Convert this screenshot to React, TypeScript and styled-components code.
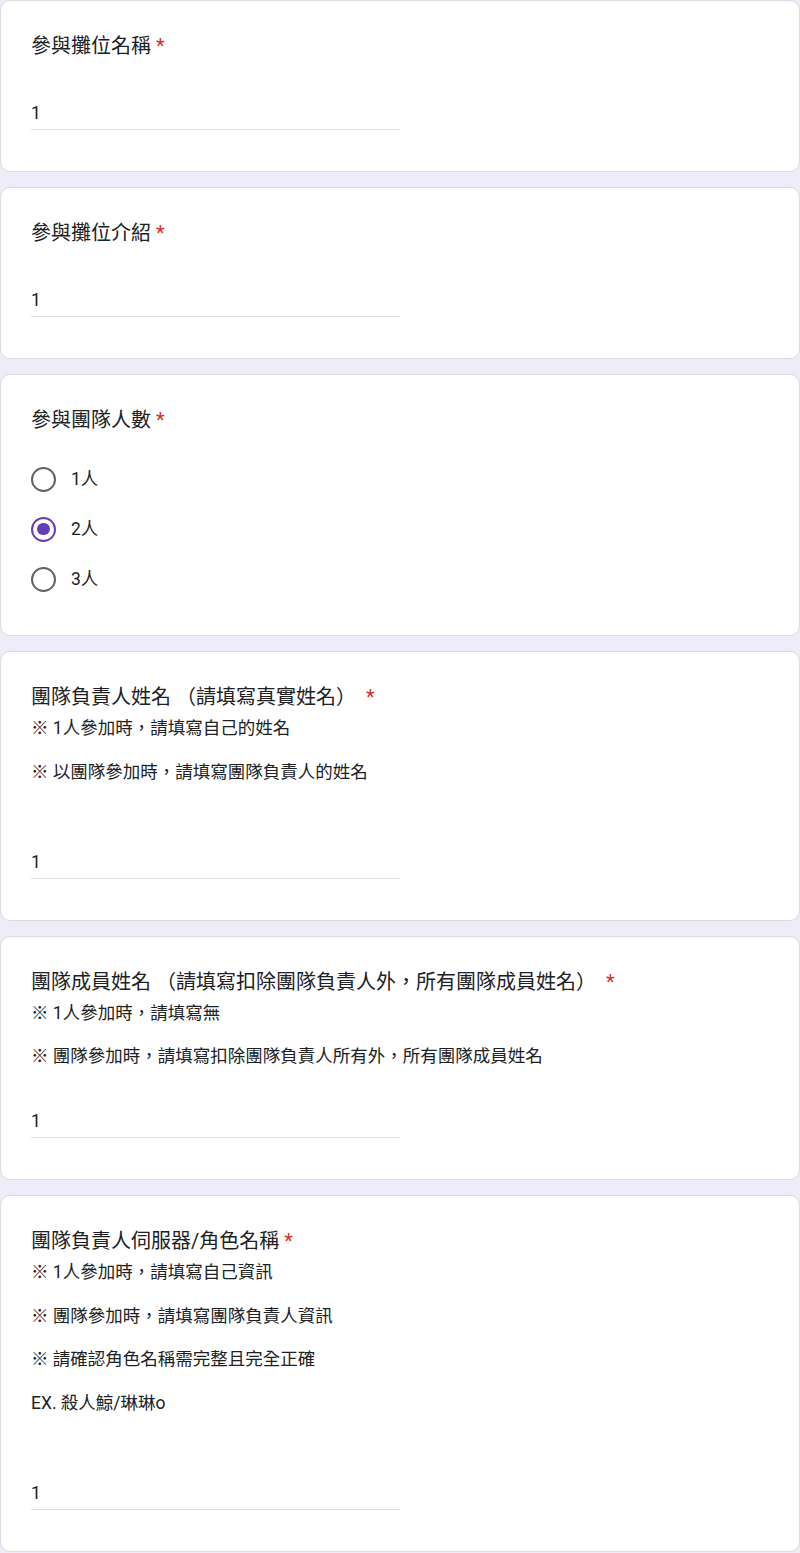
import React from "react";
import styled, { createGlobalStyle } from "styled-components";

const Global = createGlobalStyle`
  html, body { margin: 0; padding: 0; background: #f0ebf8; }
  body { font-family: Roboto, "Noto Sans CJK TC", "Noto Sans", sans-serif; color: #202124; }
  * { box-sizing: border-box; }
`;

const Page = styled.div`
  display: flex;
  flex-direction: column;
  gap: 15px;
`;

const Card = styled.section`
  background: #fff;
  border: 1px solid #dadce0;
  border-radius: 10px;
  padding: 30px 30px 30px 30px;
`;

const Title = styled.div`
  font-size: 20px;
  line-height: 30px;
  color: #202124;
  letter-spacing: 0;
  white-space: pre;
`;

const Req = styled.span`
  color: #d93025;
`;

const Desc = styled.div`
  margin-top: 4px;
  display: flex;
  flex-direction: column;
  gap: 18.5px;
`;

const DescLine = styled.div`
  font-size: 17.5px;
  line-height: 25px;
  color: #202124;
  white-space: pre;
`;

const Ghost = styled.div<{ $h: number }>`
  height: ${(p) => p.$h}px;
`;

const InputWrap = styled.div`
  margin-top: 36px;
  margin-bottom: 11px;
  width: 50%;
`;

const TextInput = styled.input`
  display: block;
  width: 100%;
  height: 33px;
  padding: 0;
  border: none;
  border-bottom: 1px solid #e0e0e0;
  outline: none;
  background: transparent;
  font-family: Roboto, "Noto Sans CJK TC", sans-serif;
  font-size: 17.5px;
  color: #202124;
`;

const Options = styled.div`
  margin-top: 19px;
  margin-bottom: 1px;
  display: flex;
  flex-direction: column;
`;

const Option = styled.label`
  display: flex;
  align-items: center;
  height: 50px;
  cursor: pointer;
`;

const Radio = styled.span<{ $on: boolean }>`
  width: 25px;
  height: 25px;
  border-radius: 50%;
  border: 2.5px solid ${(p) => (p.$on ? "#673ab7" : "#5f6368")};
  display: flex;
  align-items: center;
  justify-content: center;
  flex: none;
  &::after {
    content: "";
    width: 12.5px;
    height: 12.5px;
    border-radius: 50%;
    background: #673ab7;
    display: ${(p) => (p.$on ? "block" : "none")};
  }
`;

const OptionLabel = styled.span`
  padding-left: 15px;
  font-size: 17.5px;
  line-height: 25px;
  color: #202124;
`;

type TextQ = { title: string; desc?: string[]; ghost?: number };

const TextQuestion: React.FC<TextQ> = ({ title, desc, ghost }) => (
  <Card>
    <Title>
      {title} <Req>*</Req>
    </Title>
    {desc && (
      <Desc>
        {desc.map((d) => (
          <DescLine key={d}>{d}</DescLine>
        ))}
      </Desc>
    )}
    {ghost ? <Ghost $h={ghost} /> : null}
    <InputWrap>
      <TextInput defaultValue="1" />
    </InputWrap>
  </Card>
);

export default function App() {
  const [sel, setSel] = React.useState("2人");
  return (
    <>
      <Global />
      <Page>
        <TextQuestion title="參與攤位名稱" />
        <TextQuestion title="參與攤位介紹" />
        <Card>
          <Title>
            參與團隊人數 <Req>*</Req>
          </Title>
          <Options>
            {["1人", "2人", "3人"].map((o) => (
              <Option key={o} onClick={() => setSel(o)}>
                <Radio $on={sel === o} />
                <OptionLabel>{o}</OptionLabel>
              </Option>
            ))}
          </Options>
        </Card>
        <TextQuestion
          title="團隊負責人姓名 （請填寫真實姓名） "
          desc={["※ 1人參加時，請填寫自己的姓名", "※ 以團隊參加時，請填寫團隊負責人的姓名"]}
          ghost={25}
        />
        <TextQuestion
          title="團隊成員姓名 （請填寫扣除團隊負責人外，所有團隊成員姓名） "
          desc={["※ 1人參加時，請填寫無", "※ 團隊參加時，請填寫扣除團隊負責人所有外，所有團隊成員姓名"]}
        />
        <TextQuestion
          title="團隊負責人伺服器/角色名稱"
          desc={[
            "※ 1人參加時，請填寫自己資訊",
            "※ 團隊參加時，請填寫團隊負責人資訊",
            "※ 請確認角色名稱需完整且完全正確",
            "EX. 殺人鯨/琳琳o",
          ]}
          ghost={25}
        />
      </Page>
    </>
  );
}
